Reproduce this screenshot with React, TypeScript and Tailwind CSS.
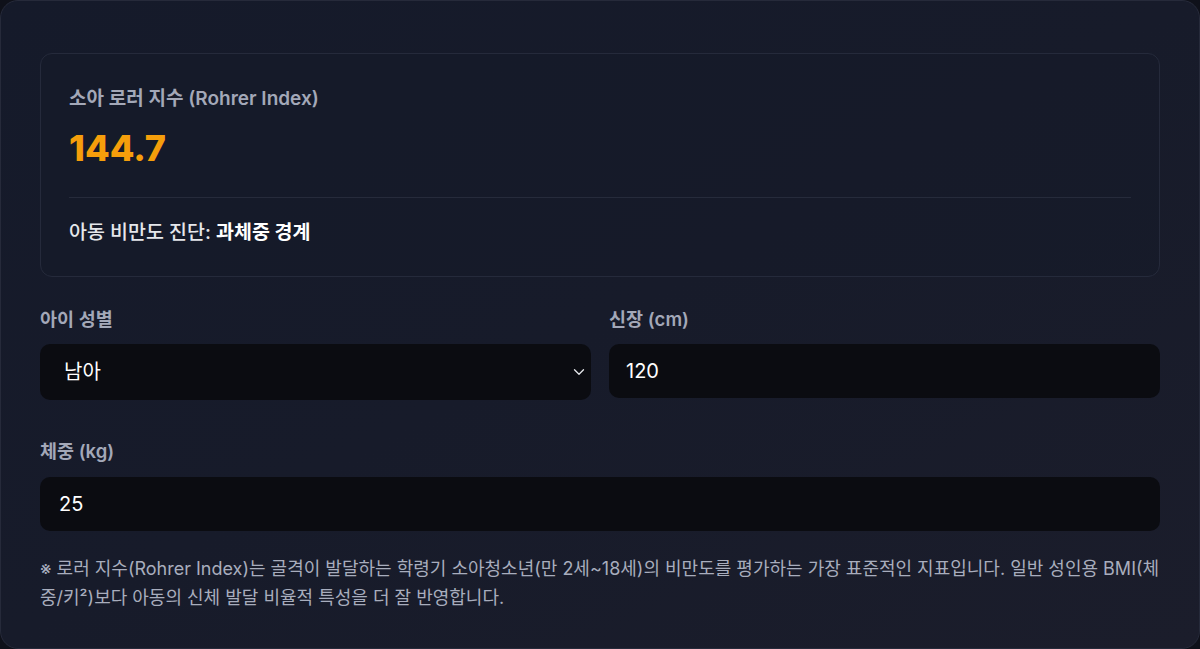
import { ChevronDown } from "lucide-react";

const font = { fontFamily: '"Inter", "Noto Sans CJK KR", sans-serif' };

export default function App() {
  return (
    <div className="min-h-screen bg-[#0f111a]" style={font}>
      <div className="h-[649px] rounded-[18px] border border-[#262a3a] bg-gradient-to-br from-[#151a2a] via-[#171b2a] to-[#1b1d2b] px-[39px] pt-[52px]">
        {/* Result box */}
        <div className="rounded-xl border border-[#252a3b] bg-[#161a29]/60 px-[28px] pt-[31px] pb-[30px]">
          <p className="text-[19px] font-semibold leading-[28px] text-[#a3a8b8]">
            소아 로러 지수 (Rohrer Index)
          </p>
          <p className="mt-[15px] text-[36px] font-extrabold leading-[40px] text-[#f59e0b]">
            144.7
          </p>
          <div className="mt-[29px] h-px bg-[#262b3b]" />
          <p className="mt-[20px] text-[19.5px] font-medium leading-[28px] text-[#e5e7eb]">
            아동 비만도 진단: <span className="font-bold text-white">과체중 경계</span>
          </p>
        </div>

        {/* Inputs */}
        <div className="mt-[28px] grid grid-cols-2 gap-[18px]">
          <div>
            <label className="block text-[18.5px] font-semibold leading-[28px] text-[#a3a8b8]">아이 성별</label>
            <div className="relative mt-[11px]">
              <select className="h-[56px] w-full appearance-none rounded-[10px] bg-[#0b0c11] px-6 text-[20px] text-white outline-none">
                <option>남아</option>
                <option>여아</option>
              </select>
              <ChevronDown
                strokeWidth={1.75}
                className="pointer-events-none absolute right-[3px] top-1/2 h-[18px] w-[18px] -translate-y-1/2 text-[#e5e7eb]"
              />
            </div>
          </div>
          <div>
            <label className="block text-[18.5px] font-semibold leading-[28px] text-[#a3a8b8]">신장 (cm)</label>
            <input
              defaultValue="120"
              className="mt-[11px] h-[54px] w-full rounded-[10px] bg-[#0b0c11] px-[17px] text-[20px] text-white outline-none"
            />
          </div>
        </div>

        <div className="mt-[37px]">
          <label className="block text-[18.5px] font-semibold leading-[28px] text-[#a3a8b8]">체중 (kg)</label>
          <input
            defaultValue="25"
            className="mt-[12px] h-[54px] w-full rounded-[10px] bg-[#0b0c11] px-[19px] text-[20px] text-white outline-none"
          />
        </div>

        <p className="mt-[23px] text-[18px] leading-[29px] text-[#a8adbd]">
          ※ 로러 지수(Rohrer Index)는 골격이 발달하는 학령기 소아청소년(만 2세~18세)의 비만도를 평가하는 가장 표준적인 지표입니다. 일반 성인용 BMI(체중/키²)보다 아동의 신체 발달 비율적 특성을 더 잘 반영합니다.
        </p>
      </div>
    </div>
  );
}
